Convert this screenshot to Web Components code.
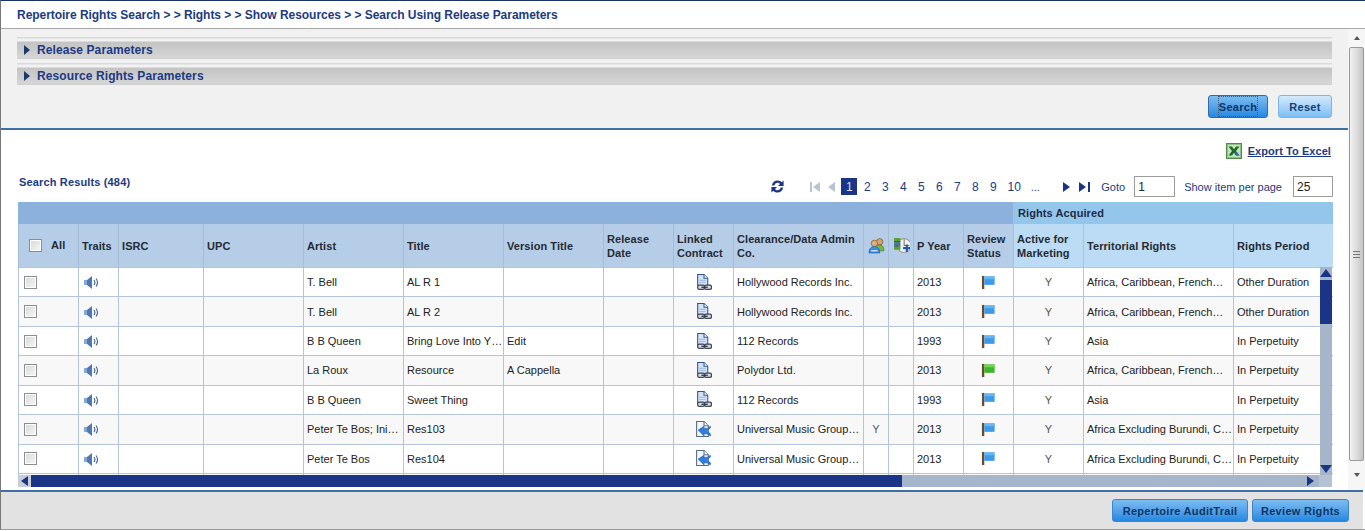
<!DOCTYPE html>
<html>
<head>
<meta charset="utf-8">
<title>Search Using Release Parameters</title>
<style>
  html, body { margin: 0; height: 531px; overflow: hidden; background: #fff; }
  body { font: 11px "Liberation Sans", Arial, sans-serif; }
</style>
</head>
<body>
<rights-page></rights-page>
<script>
// icons are 16x16 unless the caller sizes them
const ICONS = {
    speaker: `<path d="M1 6h3v5H1z" fill="#86a8d4"/><path d="M4 6l5-4v13l-5-4z" fill="#4f78b2"/><path d="M11 6c1 1.400 1 3.600 0 5M13 4.500c1.800 2.400 1.800 5.600 0 8" fill="none" stroke="#3a5f98" stroke-width="1.100"/>`,
    doclink: `<path d="M2.500 .5h6l3.500 3.500v7h-9.500z" fill="#d3e3f7" stroke="#2f5590"/><path d="M8.500 .5v3.500h3.500" fill="#fff" stroke="#2f5590"/><path d="M4 6h6M4 8h6" stroke="#a4bfe0"/><rect x="2.500" y="10.500" width="6.500" height="4" rx="1.500" fill="#d5dae2" stroke="#3f4856" stroke-width="1.200"/><rect x="9" y="10.500" width="6.500" height="4" rx="1.500" fill="#d5dae2" stroke="#3f4856" stroke-width="1.200"/><path d="M6 12.500h6" stroke="#2f3742" stroke-width="1.200"/>`,
    docshare: `<path d="M1.500 .5h7l4 4v10h-11z" fill="#f2f5fa" stroke="#5a6b85"/><path d="M8.500 .5v4h4" fill="#fff" stroke="#5a6b85"/><path d="M3 8.500L8.500 5v2h3l3-2v1.500L11 9.500l3.500 2.500V14l-3-2h-3v2z" fill="#2f7fe0" stroke="#1d5cb0" stroke-width=".6"/>`,
    flagblue: `<rect x="1" y="1" width="2.500" height="14" fill="#6b4a2e"/><path d="M3.500 1.500h11v9h-11z" fill="#3f9be8"/><path d="M3.500 1.500h11v3h-11z" fill="#69b6f2"/>`,
    flaggreen: `<rect x="1" y="1" width="2.500" height="14" fill="#6b4a2e"/><path d="M3.500 1.500h11v9h-11z" fill="#3fb52c"/><path d="M3.500 1.500h11v3h-11z" fill="#74d457"/>`,
    users: `<circle cx="11" cy="4.500" r="3" fill="#d9a36f" stroke="#7a5a2e" stroke-width=".7"/><path d="M7 13c0-4 1.500-5.500 4-5.500s4 1.500 4 5.500z" fill="#7cb342" stroke="#4d7a22" stroke-width=".7"/><circle cx="6" cy="6" r="3" fill="#e2ad7a" stroke="#8a5a2e" stroke-width=".7"/><path d="M1 15c0-4 2-6 5-6s5 2 5 6z" fill="#3f8fdc" stroke="#1d5cb0" stroke-width=".7"/><path d="M3 13h6" stroke="#dceafa" stroke-width="1.200"/>`,
    colplus: `<circle cx="10.500" cy="8" r="6.500" fill="#f4f4f4" stroke="#9a9a9a"/><path d="M10.500 2v6h5" fill="none" stroke="#777"/><rect x="1" y="1" width="6" height="3" fill="#5aa02c"/><rect x="1" y="5" width="6" height="3" fill="#3d7f8f"/><rect x="1" y="9" width="6" height="3" fill="#5aa02c"/><path d="M1 4.500h6M1 8.500h6" stroke="#234"/><path d="M9.500 9.500h2.500V7h2v2.500h2.500v2H14V14h-2v-2.500H9.500z" fill="#1d5cb0"/>`,
    excel: `<rect x=".5" y=".5" width="15" height="15" fill="#8fc184" stroke="#4f8a4a"/><rect x="2" y="2" width="12" height="12" fill="#c6e4bc"/><path d="M2.500 3.500h3.500L8 6.200l2-2.700h3.500L10 8l3.500 4.500H10L8 9.800l-2 2.700H2.500L6 8z" fill="#1d6b2a"/><path d="M8 9.800l2 2.700h3.500L10.800 9z" fill="#2f6fa8"/>`,
    refresh: `<path d="M2 7C2.500 3.500 5 1.500 8 1.500c2 0 3.500 .8 4.500 2L14.500 1.500v6h-6l2.200-2.200C10 4.500 9 4 8 4 6.300 4 5 5.200 4.700 7zM14 9c-.5 3.500-3 5.500-6 5.500-2 0-3.500-.8-4.500-2l-2 2v-6h6L5.300 10.700C6 11.500 7 12 8 12c1.700 0 3-1.200 3.300-3z" fill="#1a3587"/>`
};

class AppIcon extends HTMLElement {
    connectedCallback() {
        const size = this.getAttribute('size') || 16;
        const name = this.getAttribute('name');
        const root = this.attachShadow({ mode: 'open' });
        root.innerHTML = `
      <style>
        :host { display: inline-flex; flex: none; width: ${size}px; height: ${size}px; }
        svg { width: 100%; height: 100%; display: block; }
      </style>
      <svg viewBox="0 0 16 16" xmlns="http://www.w3.org/2000/svg">${ICONS[name]}</svg>`;
    }
}
customElements.define('app-icon', AppIcon);

class UiButton extends HTMLElement {
    constructor() {
        super();
        this.attachShadow({ mode: 'open' }).innerHTML = `
      <style>
        :host {
          display: inline-flex; align-items: center; justify-content: center;
          box-sizing: border-box; height: 23px; padding: 0 10px;
          border: 1px solid #7fb4e4; border-radius: 3px;
          background: linear-gradient(#d3e9fc, #a9d5f9 50%, #7cbff5);
          color: #123f75; font: bold 11px "Liberation Sans", Arial, sans-serif;
          letter-spacing: .3px; white-space: nowrap;
        }
        :host([primary]) {
          border-color: #3d85c9;
          background: linear-gradient(#7cbcf0, #55a3ea 50%, #2488e2);
          color: #0c3663;
        }
        :host([focused]) { border-color: #2f6da8; }
        :host([focused]) span { outline: 1px dotted #3a5a7a; display: flex; align-items: center; justify-content: center; width: 52px; height: 19px; }
      </style>
      <span><slot></slot></span>`;
    }
}
customElements.define('ui-button', UiButton);

class ParamBar extends HTMLElement {
    constructor() {
        super();
        this.attachShadow({ mode: 'open' }).innerHTML = `
      <style>
        :host {
          display: flex; align-items: center; box-sizing: border-box; height: 22px;
          padding: 4px 0 0 7px;
          background: linear-gradient(#d9d9d9 0, #d9d9d9 1px, #f2f2f2 2px, #f2f2f2 4px, #c4c4c4 5px, #cdcdcd 14px, #d6d6d6 100%);
          border-bottom: 1px solid #cfcfcf;
          color: #1c3a82; font: bold 12px "Liberation Sans", Arial, sans-serif; letter-spacing: .1px;
        }
        i { width: 0; height: 0; margin-right: 7px; border-left: 6px solid #1a3a6c; border-top: 5px solid transparent; border-bottom: 5px solid transparent; }
      </style>
      <i></i><slot></slot>`;
    }
}
customElements.define('param-bar', ParamBar);

class PagerBar extends HTMLElement {
    connectedCallback() {
        const pages = ['1', '2', '3', '4', '5', '6', '7', '8', '9', '10', '...'];
        const root = this.attachShadow({ mode: 'open' });
        root.innerHTML = `
      <style>
        :host { display: flex; align-items: center; height: 21px; color: #1c3a82; font: 11px "Liberation Sans", Arial, sans-serif; }
        .refresh { margin-right: 25px; }
        .nav { display: flex; align-items: center; gap: 8px; }
        .tri { display: block; width: 0; height: 0; border-top: 5px solid transparent; border-bottom: 5px solid transparent; }
        .l { border-right: 7px solid #b9c3d2; }
        .r { border-left: 7px solid #1a3587; }
        .stop { display: block; width: 2px; height: 10px; }
        .first, .last { display: flex; align-items: center; }
        .first { gap: 1px; }
        .last { gap: 2px; }
        .pages { display: flex; margin: 0 0 0 6px; }
        .pages span { width: 16px; margin-right: 2px; height: 17px; display: flex; align-items: center; justify-content: center; font-size: 12px; }
        .pages span:nth-child(10) { width: 22px; }
        .pages span.on { background: #1a3587; color: #d8e2f4; }
        .pages span:last-child { margin-right: 0; font-size: 11px; }
        label { white-space: nowrap; }
        .box { box-sizing: border-box; height: 21px; border: 1px solid #9c9c9c; background: #fff; color: #222; font-size: 12px; padding: 1px 3px; display: flex; align-items: center; }
      </style>
      <app-icon class="refresh" name="refresh" size="15"></app-icon>
      <div class="nav">
        <div class="first"><i class="stop" style="background:#b9c3d2"></i><i class="tri l"></i></div>
        <i class="tri l"></i>
      </div>
      <div class="pages">${pages.map((p, i) => `<span class="${i === 0 ? 'on' : ''}">${p}</span>`).join('')}</div>
      <div class="nav" style="margin-left:20px;gap:9px">
        <i class="tri r"></i>
        <div class="last"><i class="tri r"></i><i class="stop" style="background:#1a3587"></i></div>
      </div>
      <label style="margin-left:11px">Goto</label>
      <div class="box" style="width:41px;margin-left:9px">1</div>
      <label style="margin-left:9px">Show item per page</label>
      <div class="box" style="width:40px;margin-left:11px">25</div>`;
    }
}
customElements.define('pager-bar', PagerBar);

const COLS = '60px 40px 85px 100px 100px 100px 100px 70px 60px 130px 25px 25px 50px 50px 70px 150px 100px';
const AFR = 'Africa, Caribbean, French\u2026';
const AFX = 'Africa Excluding Burundi, C\u2026';
const ROWS = [
    ['T. Bell', 'AL R 1', '', 'doclink', 'Hollywood Records Inc.', '', '2013', 'flagblue', AFR, 'Other Duration'],
    ['T. Bell', 'AL R 2', '', 'doclink', 'Hollywood Records Inc.', '', '2013', 'flagblue', AFR, 'Other Duration'],
    ['B B Queen', 'Bring Love Into Y\u2026', 'Edit', 'doclink', '112 Records', '', '1993', 'flagblue', 'Asia', 'In Perpetuity'],
    ['La Roux', 'Resource', 'A Cappella', 'doclink', 'Polydor Ltd.', '', '2013', 'flaggreen', AFR, 'In Perpetuity'],
    ['B B Queen', 'Sweet Thing', '', 'doclink', '112 Records', '', '1993', 'flagblue', 'Asia', 'In Perpetuity'],
    ['Peter Te Bos; Ini\u2026', 'Res103', '', 'docshare', 'Universal Music Group\u2026', 'Y', '2013', 'flagblue', AFX, 'In Perpetuity'],
    ['Peter Te Bos', 'Res104', '', 'docshare', 'Universal Music Group\u2026', '', '2013', 'flagblue', AFX, 'In Perpetuity'],
    ['', '', '', '', '', '', '', '', '', '']
];

class ResultsGrid extends HTMLElement {
    connectedCallback() {
        const root = this.attachShadow({ mode: 'open' });
        const head = [
            ['<span class="chk big"></span><b class="all">All</b>', 'allc'], ['Traits'], ['ISRC'], ['UPC'], ['Artist'], ['Title'], ['Version Title'],
            ['Release<br>Date'], ['Linked<br>Contract'], ['Clearance/Data Admin<br>Co.'],
            ['<app-icon name="users" size="17"></app-icon>', 'mid'], ['<app-icon name="colplus" size="17"></app-icon>', 'mid'],
            ['P Year'], ['Review<br>Status'], ['Active for<br>Marketing', 'ra'], ['Territorial Rights', 'ra'], ['Rights Period', 'ra']
        ];
        const row = (r) => `
        <div class="row">
          <div class="c"><span class="chk"></span></div>
          <div class="c sp"><app-icon name="speaker" size="16"></app-icon></div>
          <div class="c"></div><div class="c"></div>
          <div class="c">${r[0]}</div><div class="c">${r[1]}</div><div class="c">${r[2]}</div><div class="c"></div>
          <div class="c mid">${r[3] ? `<app-icon name="${r[3]}" size="17"></app-icon>` : ''}</div>
          <div class="c">${r[4]}</div>
          <div class="c mid gy">${r[5]}</div><div class="c"></div>
          <div class="c">${r[6]}</div>
          <div class="c mid">${r[7] ? `<app-icon name="${r[7]}" size="15"></app-icon>` : ''}</div>
          <div class="c mid gy">${r[6] ? 'Y' : ''}</div>
          <div class="c">${r[8]}</div><div class="c">${r[9]}</div>
        </div>`;
        root.innerHTML = `
      <style>
        :host { display: block; width: 1315px; font: 11px "Liberation Sans", Arial, sans-serif; color: #222; }
        .top { display: grid; grid-template-columns: 995px 320px; height: 22px; }
        .top div:first-child { background: #8cb1dc; }
        .top div:last-child { background: #94c6ec; font-weight: bold; letter-spacing: .1px; padding: 5px 0 0 5px; box-sizing: border-box; color: #1c2c44; }
        .head { display: grid; grid-template-columns: ${COLS}; height: 43px; font-weight: bold; letter-spacing: .07px; line-height: 14px; color: #252b33; }
        .head > div { background: #b6cde8; border-left: 1px solid #a4bcd8; display: flex; align-items: center; padding-left: 3px; box-sizing: border-box; }
        .head > div.ra { background: #bbdcf4; border-left-color: #a4c4de; }
        .head > div.mid { justify-content: center; padding: 0; }
        .head > div.allc { padding-left: 10px; }
        .all { margin-left: 9px; margin-top: -2px; }
        .body { position: relative; height: 208px; overflow: hidden; }
        .row { display: grid; grid-template-columns: ${COLS}; height: 29.43px; box-sizing: border-box; border-top: 1px solid #b5c5d9; background: #fff; }
        .row:nth-child(even) { background: #f8f8f8; }
        .c { display: flex; align-items: center; padding-left: 3px; border-left: 1px solid #b5c5d9; white-space: nowrap; overflow: hidden; box-sizing: border-box; }
        .c:first-child { padding-left: 5px; }
        .mid { justify-content: center; padding-left: 0; }
        .sp { padding-left: 4px; }
        .gy { color: #555; }
        .chk { display: inline-block; flex: none; box-sizing: border-box; width: 13px; height: 13px; border: 1px solid #8e8e8e; background: linear-gradient(135deg, #d8d8d8, #f8f8f8); box-shadow: inset 0 0 0 1px #fff; }
        .vbar { position: absolute; right: 1px; top: 0; width: 12px; height: 208px; background: #a5b6cb; }
        .vbar .up, .vbar .down { position: absolute; left: 0; width: 0; height: 0; border-left: 6px solid transparent; border-right: 6px solid transparent; }
        .vbar .up { top: 2px; border-bottom: 8px solid #1a3587; }
        .vbar .down { top: 198px; border-top: 8px solid #1a3587; }
        .vbar .thumb { position: absolute; left: 0; top: 13px; width: 12px; height: 44px; background: #1a3587; }
        .hbar { display: grid; grid-template-columns: 13px 871px 1fr 12px 13px; height: 12px; width: 1314px; background: #a5b6cb; }
        .hbar .la { background: #c8ced8; display: flex; align-items: center; justify-content: center; }
        .hbar .th { background: #1a3587; }
        .hbar .ra { display: flex; align-items: center; justify-content: flex-start; }
        .hbar .la i { width: 0; height: 0; border-top: 5px solid transparent; border-bottom: 5px solid transparent; border-right: 7px solid #1a3587; }
        .hbar .ra i { width: 0; height: 0; border-top: 5px solid transparent; border-bottom: 5px solid transparent; border-left: 7px solid #1a3587; }
        .hbar .corner { background: #b6c2d2; }
      </style>
      <div class="top"><div></div><div>Rights Acquired</div></div>
      <div class="head">${head.map(h => `<div class="${h[1] || ''}">${h[0]}</div>`).join('')}</div>
      <div class="body">
        ${ROWS.map(row).join('')}
        <div class="vbar"><i class="up"></i><i class="thumb"></i><i class="down"></i></div>
      </div>
      <div class="hbar"><div class="la"><i></i></div><div class="th"></div><div></div><div class="ra"><i></i></div><div class="corner"></div></div>`;
    }
}
customElements.define('results-grid', ResultsGrid);

class PageScrollbar extends HTMLElement {
    constructor() {
        super();
        this.attachShadow({ mode: 'open' }).innerHTML = `
      <style>
        :host { display: flex; flex-direction: column; align-items: center; box-sizing: border-box; width: 17px; flex: none; background: #f6f6f6; }
        .btn { flex: none; display: flex; align-items: center; justify-content: center; }
        .btn i { width: 0; height: 0; border-left: 3px solid transparent; border-right: 3px solid transparent; }
        .up { height: 18px; }
        .up i { border-bottom: 4px solid #555; }
        .down { height: 29px; padding-bottom: 2px; box-sizing: border-box; }
        .down i { border-top: 4px solid #555; }
        .thumb { flex: 1; width: 15px; box-sizing: border-box; border: 1px solid #9a9a9a; border-radius: 2px; background: linear-gradient(90deg, #f2f2f2, #d8d8d8 60%, #c4c4c4); display: flex; align-items: center; justify-content: center; margin-left: -1px; }
        .grip { width: 7px; height: 7px; background: repeating-linear-gradient(#777 0 1px, transparent 1px 3px); }
      </style>
      <div class="btn up"><i></i></div>
      <div class="thumb"><div class="grip"></div></div>
      <div class="btn down"><i></i></div>`;
    }
}
customElements.define('page-scrollbar', PageScrollbar);

class RightsPage extends HTMLElement {
    constructor() {
        super();
        this.attachShadow({ mode: 'open' }).innerHTML = `
      <style>
        :host { display: flex; flex-direction: column; box-sizing: border-box; height: 530px; width: 1365px; border-top: 1px solid #1c3564; border-left: 1px solid #777; border-bottom: 1px solid #9a9a9a; font: 11px "Liberation Sans", Arial, sans-serif; }
        .crumb { height: 28px; flex: none; box-sizing: border-box; border-bottom: 1px solid #a8a8a8; padding-left: 16px; display: flex; align-items: center; color: #1c3a82; font-weight: bold; font-size: 12px; letter-spacing: -.04px; white-space: pre; background: #fff; }
        .mid { flex: 1; display: flex; min-height: 0; }
        .main { flex: 1; min-width: 0; display: flex; flex-direction: column; }
        .search { height: 99px; flex: none; box-sizing: border-box; background: #f1f1f1; padding: 8px 16px 0 16px; display: flex; flex-direction: column; gap: 4px; }
        .actions { display: flex; justify-content: flex-end; gap: 10px; margin-top: 6px; }
        .results { flex: 1; border-top: 2px solid #3f6ea8; padding-left: 17px; background: #fff; min-height: 0; }
        .export { display: flex; justify-content: flex-end; align-items: center; gap: 6px; height: 16px; margin: 13px 17px 0 0; color: #1c3a82; font-weight: bold; letter-spacing: .07px; }
        .export span { text-decoration: underline; }
        .title-row { display: flex; justify-content: space-between; align-items: flex-end; width: 1315px; height: 21px; margin: 17px 0 5px; }
        .title { color: #1c3a82; font-weight: bold; letter-spacing: .15px; margin: 0 0 9px 1px; }
        .foot { height: 39px; flex: none; box-sizing: border-box; border-top: 2px solid #3f6ea8; background: #e2e2e2; margin-right: 2px; padding: 7px 14px 0 0; display: flex; justify-content: flex-end; gap: 4px; }
      </style>
      <div class="crumb">Repertoire Rights Search > > Rights > > Show Resources > > Search Using Release Parameters</div>
      <div class="mid">
        <div class="main">
          <div class="search">
            <param-bar>Release Parameters</param-bar>
            <param-bar>Resource Rights Parameters</param-bar>
            <div class="actions">
              <ui-button primary focused style="width:60px">Search</ui-button>
              <ui-button style="width:54px">Reset</ui-button>
            </div>
          </div>
          <div class="results">
            <div class="export"><app-icon name="excel" size="16"></app-icon><span>Export To Excel</span></div>
            <div class="title-row">
              <div class="title">Search Results (484)</div>
              <pager-bar></pager-bar>
            </div>
            <results-grid></results-grid>
          </div>
        </div>
        <page-scrollbar></page-scrollbar>
      </div>
      <div class="foot">
        <ui-button primary style="width:136px">Repertoire AuditTrail</ui-button>
        <ui-button primary style="width:97px">Review Rights</ui-button>
      </div>`;
    }
}
customElements.define('rights-page', RightsPage);
</script>
</body>
</html>
